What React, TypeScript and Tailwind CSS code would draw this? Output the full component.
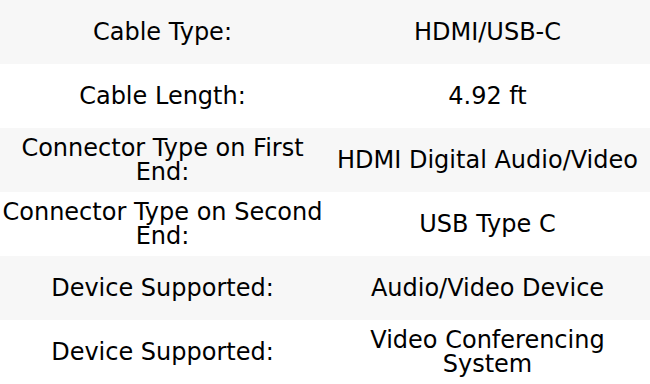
const rows: [string, string][] = [
  ["Cable Type:", "HDMI/USB-C"],
  ["Cable Length:", "4.92 ft"],
  ["Connector Type on First End:", "HDMI Digital Audio/Video"],
  ["Connector Type on Second End:", "USB Type C"],
  ["Device Supported:", "Audio/Video Device"],
  ["Device Supported:", "Video Conferencing System"],
];

export default function App() {
  return (
    <div className="w-[650px] bg-white text-black font-['DejaVu_Sans',sans-serif] text-[24px] leading-[24px]">
      {rows.map(([label, value], i) => (
        <div
          key={i}
          className={`grid grid-cols-2 h-16 items-center text-center ${i % 2 === 0 ? "bg-[#f7f7f7]" : "bg-white"}`}
        >
          <div>{label}</div>
          <div>{value}</div>
        </div>
      ))}
    </div>
  );
}
